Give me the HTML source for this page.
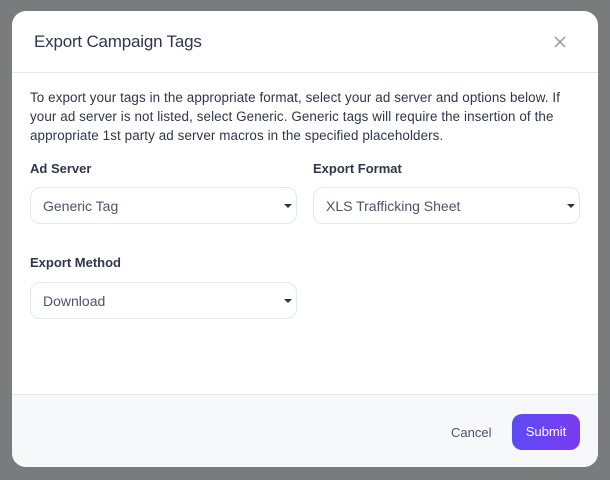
<!DOCTYPE html>
<html><head><style>
*{box-sizing:border-box;margin:0;padding:0}
body{width:610px;height:480px;background:#7a7b7d;font-family:"Liberation Sans",sans-serif;position:relative;overflow:hidden}
.m{position:absolute;left:12px;top:11px;width:586px;height:456px;background:#fff;border-radius:14px;overflow:hidden}
.h{height:62px;border-bottom:1px solid #e2e8f0;position:relative}
.h h1{position:absolute;left:22px;top:21px;font-size:17px;font-weight:normal;color:#2d3748;letter-spacing:-0.2px}
.x{position:absolute;left:541px;top:24px}
.p{position:absolute;left:18px;top:77px;width:570px;font-size:13.4px;line-height:19px;color:#2d3748;white-space:nowrap;letter-spacing:0.1px}
.l{position:absolute;font-size:13px;font-weight:bold;color:#2d3748}
.s{position:absolute;width:267px;height:37px;border:1px solid #e2e8f0;border-radius:10px;font-size:14px;color:#4a5568;padding:10px 0 0 12px}
.s:after{content:"";position:absolute;right:4px;top:16px;border:4px solid transparent;border-top:4px solid #333;border-bottom:0}
.f{position:absolute;left:0;top:383px;width:586px;height:73px;background:#f7f8fa;border-top:1px solid #e2e8f0}
.c{position:absolute;left:439px;top:30px;font-size:13px;color:#4a5568}
.b{position:absolute;left:500px;top:19px;width:68px;height:36px;border-radius:10px;background:linear-gradient(90deg,#5b4cf5,#7b3af0);color:#fff;font-size:13px;text-align:center;line-height:36px}
</style></head><body>
<div class="m">
<div class="h"><h1>Export Campaign Tags</h1>
<svg class="x" width="14" height="14" viewBox="0 0 14 14"><path d="M2 2L12 12M12 2L2 12" stroke="#8a94a6" stroke-width="1.4"/></svg></div>
<div class="p">To export your tags in the appropriate format, select your ad server and options below. If<br>your ad server is not listed, select Generic. Generic tags will require the insertion of the<br>appropriate 1st party ad server macros in the specified placeholders.</div>
<div class="l" style="left:18px;top:150px">Ad Server</div>
<div class="l" style="left:301px;top:150px">Export Format</div>
<div class="s" style="left:18px;top:176px">Generic Tag</div>
<div class="s" style="left:301px;top:176px">XLS Trafficking Sheet</div>
<div class="l" style="left:18px;top:244px">Export Method</div>
<div class="s" style="left:18px;top:271px">Download</div>
<div class="f"><span class="c">Cancel</span><div class="b">Submit</div></div>
</div>
</body></html>
